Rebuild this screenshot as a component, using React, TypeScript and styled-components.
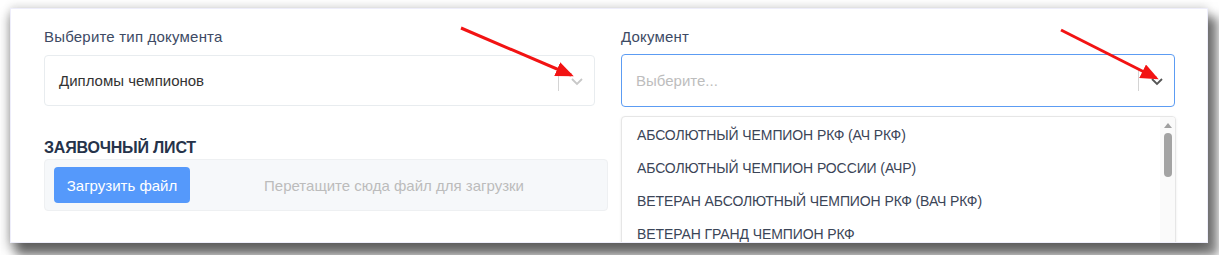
import styled, { createGlobalStyle } from "styled-components";

const GlobalStyle = createGlobalStyle`
  html, body {
    background: #ffffff;
  }
  body {
    margin: 0;
    padding: 8px 0 0 10px;
    min-height: 255px;
    box-sizing: border-box;
    font-family: "Liberation Sans", Arial, sans-serif;
  }
`;

const Card = styled.div`
  position: relative;
  width: 1198px;
  height: 235px;
  box-sizing: border-box;
  background: #fff;
  border: 1px solid #eeeefb;
  box-shadow: 0 -3px 8px rgba(0, 0, 0, 0.1), -2px 6px 10px rgba(0, 0, 0, 0.25),
    8px 11px 10px 2px rgba(0, 0, 0, 0.5);
  overflow: hidden;
  padding: 18px 33px 0 33px;
  display: grid;
  grid-template-columns: 564px 554px;
  column-gap: 13px;
  align-content: start;
`;

const Column = styled.div`
  position: relative;
  display: flex;
  flex-direction: column;
`;

const Label = styled.div`
  font-size: 15px;
  line-height: 19px;
  letter-spacing: 0.2px;
  color: #3d4a64;
  margin-bottom: 9px;
`;

const SelectBox = styled.div<{ focused?: boolean }>`
  box-sizing: border-box;
  width: ${({ focused }) => (focused ? "554px" : "551px")};
  height: ${({ focused }) => (focused ? "53px" : "51px")};
  margin-top: ${({ focused }) => (focused ? "-1px" : "0")};
  border: 1px solid ${({ focused }) => (focused ? "#5c9cf3" : "#e8ecef")};
  border-radius: 4px;
  display: flex;
  align-items: center;
  padding: 0 10px 0 14px;
  background: #fff;
`;

const Value = styled.span<{ placeholder?: boolean }>`
  flex: 1;
  font-size: 15px;
  color: ${({ placeholder }) => (placeholder ? "#bdbdbd" : "#333")};
`;

const Separator = styled.span`
  width: 1px;
  height: 21px;
  background: #d4d4d4;
  margin-right: 11px;
`;

const Chevron = ({ color }: { color: string }) => (
  <svg width="14" height="14" viewBox="0 0 14 14">
    <path d="M2 5 L7 10 L12 5" fill="none" stroke={color} strokeWidth="1.8" />
  </svg>
);

const Heading = styled.div`
  margin-top: 32px;
  font-size: 16px;
  line-height: 20px;
  font-weight: bold;
  color: #26334a;
  letter-spacing: -0.2px;
`;

const Dropzone = styled.div`
  box-sizing: border-box;
  margin-top: 1px;
  height: 52px;
  width: 564px;
  border: 1px solid #eef0f2;
  border-radius: 4px;
  background: #f6f8fa;
  display: flex;
  align-items: center;
  padding: 0 9px;
`;

const UploadButton = styled.button`
  height: 36px;
  width: 136px;
  border: none;
  border-radius: 4px;
  background: #5599fb;
  color: #fff;
  font-family: inherit;
  font-size: 15px;
  padding: 0;
`;

const DropHint = styled.span`
  flex: 1;
  text-align: center;
  font-size: 15px;
  color: #bcbcbc;
`;

const Menu = styled.div`
  position: absolute;
  top: 89px;
  left: 0;
  width: 555px;
  height: 140px;
  box-sizing: border-box;
  border: 1px solid #e6e6e6;
  border-radius: 4px;
  background: #fff;
  display: flex;
  overflow: hidden;
  box-shadow: 0 1px 3px rgba(0, 0, 0, 0.08);
`;

const MenuList = styled.div`
  flex: 1;
  padding-top: 1px;
`;

const MenuItem = styled.div`
  height: 33px;
  display: flex;
  align-items: center;
  padding-left: 15px;
  font-size: 14px;
  letter-spacing: -0.1px;
  color: #3b4557;
`;

const Scrollbar = styled.div`
  width: 15px;
  display: flex;
  flex-direction: column;
  align-items: center;
  padding-top: 6px;
  background: #fafafa;
`;

const ScrollArrow = styled.div`
  width: 0;
  height: 0;
  border-left: 4px solid transparent;
  border-right: 4px solid transparent;
  border-bottom: 5px solid #a0a0a0;
`;

const ScrollThumb = styled.div`
  margin-top: 5px;
  width: 8px;
  height: 44px;
  border-radius: 4px;
  background: #a3a3a3;
`;

const Arrows = styled.svg`
  position: absolute;
  left: 0;
  top: 0;
  pointer-events: none;
`;

const items = [
  "АБСОЛЮТНЫЙ ЧЕМПИОН РКФ (АЧ РКФ)",
  "АБСОЛЮТНЫЙ ЧЕМПИОН РОССИИ (АЧР)",
  "ВЕТЕРАН АБСОЛЮТНЫЙ ЧЕМПИОН РКФ (ВАЧ РКФ)",
  "ВЕТЕРАН ГРАНД ЧЕМПИОН РКФ",
];

export default function App() {
  return (
    <>
      <GlobalStyle />
      <Card>
        <Column>
          <Label>Выберите тип документа</Label>
          <SelectBox>
            <Value>Дипломы чемпионов</Value>
            <Separator />
            <Chevron color="#c8c8c8" />
          </SelectBox>
          <Heading>ЗАЯВОЧНЫЙ ЛИСТ</Heading>
          <Dropzone>
            <UploadButton>Загрузить файл</UploadButton>
            <DropHint>Перетащите сюда файл для загрузки</DropHint>
          </Dropzone>
        </Column>
        <Column>
          <Label>Документ</Label>
          <SelectBox focused>
            <Value placeholder>Выберите...</Value>
            <Separator />
            <Chevron color="#555" />
          </SelectBox>
          <Menu>
            <MenuList>
              {items.map((t) => (
                <MenuItem key={t}>{t}</MenuItem>
              ))}
            </MenuList>
            <Scrollbar>
              <ScrollArrow />
              <ScrollThumb />
            </Scrollbar>
          </Menu>
        </Column>
        <Arrows width="1198" height="235">
          <defs>
            <marker
              id="head"
              markerWidth="6"
              markerHeight="5"
              refX="5"
              refY="2.5"
              orient="auto"
              markerUnits="strokeWidth"
            >
              <path d="M0 0 L6 2.5 L0 5 Z" fill="#f21313" />
            </marker>
          </defs>
          <line x1="450" y1="19" x2="560" y2="66" stroke="#f21313" strokeWidth="3" markerEnd="url(#head)" />
          <line x1="1050" y1="21" x2="1145" y2="69" stroke="#f21313" strokeWidth="3" markerEnd="url(#head)" />
        </Arrows>
      </Card>
    </>
  );
}
